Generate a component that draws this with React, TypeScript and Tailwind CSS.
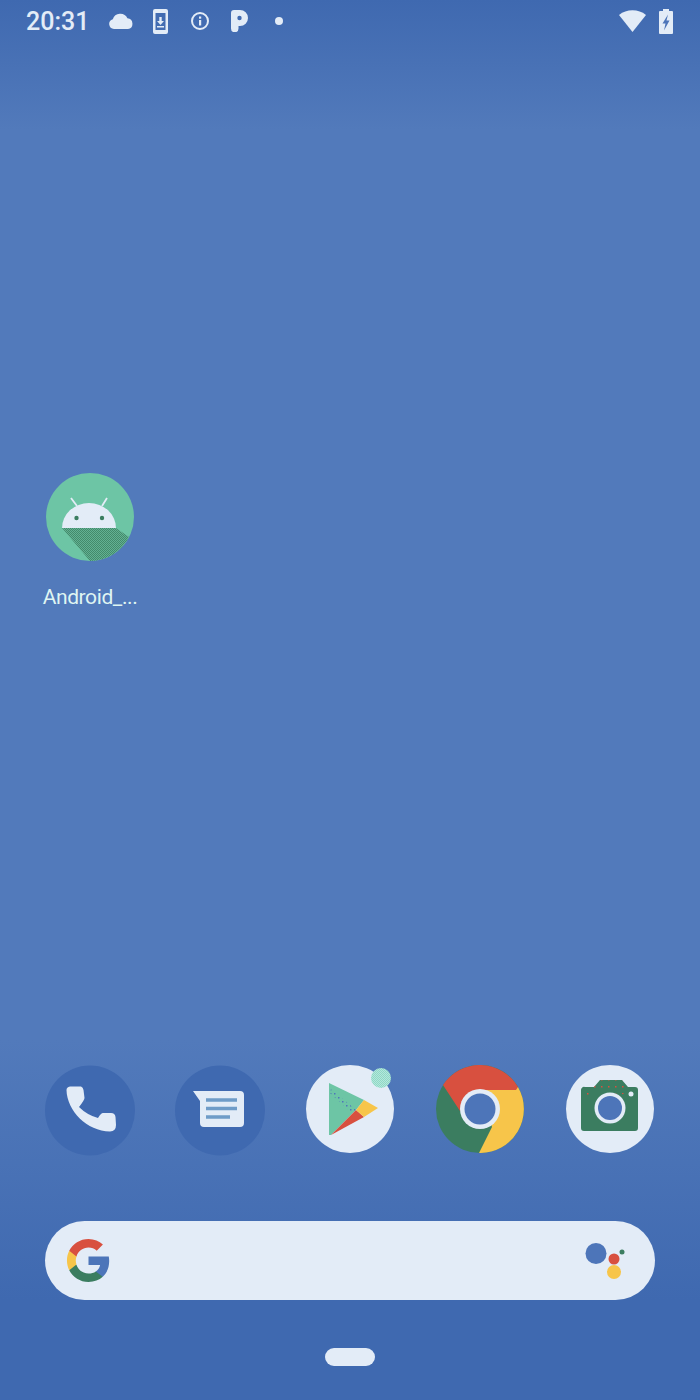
import React from 'react';

const INK = '#e3ecf7';
const GREEN = '#3b7d60';
const RED = '#d8503f';
const YELLOW = '#f7c54a';
const MINT = '#6dc5a5';
const BLUE = '#4d75b9';

const Dither = ({ id, a, b }: { id: string; a: string; b: string }) => (
  <pattern id={id} width="2" height="2" patternUnits="userSpaceOnUse">
    <rect width="2" height="2" fill={a} />
    <rect width="1" height="1" fill={b} />
    <rect x="1" y="1" width="1" height="1" fill={b} />
  </pattern>
);

const Specks = ({ id, color, size }: { id: string; color: string; size: number }) => (
  <pattern id={id} width={size} height={size} patternUnits="userSpaceOnUse">
    <rect width="1.500" height="1.500" fill={color} />
  </pattern>
);

const StatusBar = () => (
  <div className="flex h-[42px] items-center pl-[26px] pr-[27px]">
    <span className="text-[25px] font-medium leading-none text-[#e3ecf7] font-['Roboto',sans-serif]">20:31</span>
    {/* cloud */}
    <svg className="ml-[20px]" width="24" height="16" viewBox="0 0 24 16">
      <path fill={INK} d="M5 16A5 5 0 0 1 3.800 6.200 7.800 7.800 0 0 1 18.400 5.300 5.400 5.400 0 0 1 19 16Z" />
    </svg>
    {/* phone with download arrow */}
    <svg className="ml-[20px]" width="15" height="25" viewBox="0 0 15 25">
      <path fill={INK} fillRule="evenodd" d="M2 0H13A2 2 0 0 1 15 2V23A2 2 0 0 1 13 25H2A2 2 0 0 1 0 23V2A2 2 0 0 1 2 0ZM2.500 4V21H12.500V4Z" />
      <path fill={INK} d="M6.300 8H8.700V12H11L7.500 16L4 12H6.300ZM4 17H11V18.500H4Z" />
    </svg>
    {/* info */}
    <svg className="ml-[23px]" width="18" height="18" viewBox="0 0 18 18">
      <circle cx="9" cy="9" r="8" fill="none" stroke={INK} strokeWidth="2" />
      <rect x="8" y="8" width="2.200" height="5.500" fill={INK} />
      <rect x="8" y="4.500" width="2.200" height="2.200" fill={INK} />
    </svg>
    {/* P */}
    <svg className="ml-[22px]" width="17" height="22" viewBox="0 0 17 22">
      <path fill={INK} fillRule="evenodd" d="M3 0H9A8 8 0 0 1 9 16H7.500V18.500A3.500 3.500 0 0 1 0 18.500V3A3 3 0 0 1 3 0ZM8.500 5.800A2.200 2.200 0 0 0 8.500 10.200A2.200 2.200 0 0 0 8.500 5.800Z" />
    </svg>
    <span className="ml-[27px] h-[8px] w-[8px] rounded-full bg-[#e3ecf7]" />
    {/* wifi */}
    <svg className="ml-auto" width="27" height="22" viewBox="0 0 27 22">
      <path fill={INK} d="M0 5A22 22 0 0 1 27 5L13.500 22Z" />
    </svg>
    {/* battery */}
    <svg className="ml-[13px]" width="14" height="25" viewBox="0 0 14 25">
      <path fill={INK} d="M4 0H10V2H13A1 1 0 0 1 14 3V24A1 1 0 0 1 13 25H1A1 1 0 0 1 0 24V3A1 1 0 0 1 1 2H4Z" />
      <path fill={BLUE} d="M9 5.500L3.500 14.500H6.500L5 21.500L10.500 11.500H7.500Z" />
    </svg>
  </div>
);

const AndroidApp = () => (
  <div className="ml-[25px] mt-[431px] flex w-[130px] flex-col items-center">
    <svg width="88" height="88" viewBox="0 0 88 88">
      <defs>
        <Dither id="androidShadow" a="#438a6b" b="#63b193" />
      </defs>
      <circle cx="44" cy="44" r="44" fill={MINT} />
      <path fill="url(#androidShadow)" d="M16 55H70L83 64A44 44 0 0 1 44 88Z" />
      <path stroke={INK} strokeWidth="1.800" d="M25 25L31 33M61 25L56 33" />
      <path fill={INK} d="M16 55A27 25 0 0 1 70 55Z" />
      <circle cx="30.500" cy="45" r="2.200" fill={GREEN} />
      <circle cx="56" cy="45" r="2.200" fill={GREEN} />
    </svg>
    <span className="mt-[24px] text-[21px] leading-[24px] tracking-[-0.4px] text-[#dff5f2] font-['Roboto',sans-serif]">Android_...</span>
  </div>
);

const Dock = () => (
  <div className="mt-auto grid grid-cols-5 items-start px-[25px]">
    <div className="flex justify-center">
      <svg width="90" height="91" viewBox="0 0 90 91">
        <circle cx="45" cy="45.500" r="45" fill="#3f69b0" />
        <path fill={INK} d="M25 21.500H36Q38 22 38.500 25L39.500 33Q39.500 35 34 42Q42 50 53 53Q56 48 58 48H66Q70 48 70.500 52L71 60Q71 66 65 66.500C42 66 22 46 21.500 25Q21.500 22 25 21.500Z" />
      </svg>
    </div>
    <div className="flex justify-center">
      <svg width="90" height="91" viewBox="0 0 90 91">
        <circle cx="45" cy="45.500" r="45" fill="#3f69b0" />
        <path fill={INK} d="M18 26H65A4 4 0 0 1 69 30V58A4 4 0 0 1 65 62H37Q33 62 29 62A4 4 0 0 1 25 58V36Z" />
        <path stroke="#6f9cc8" strokeWidth="3.500" d="M31 35H62M31 43.500H62M31 52H55" />
      </svg>
    </div>
    <div className="flex justify-center">
      <svg width="88" height="88" viewBox="0 0 88 88" className="overflow-visible">
        <defs>
          <Dither id="badge" a="#8ed9c5" b="#b5e6dc" />
          <Specks id="playSpecks" color={BLUE} size={4} />
        </defs>
        <circle cx="44" cy="44" r="44" fill={INK} />
        <path fill={MINT} d="M23 18L58 35L50 45L25 70H23Z" />
        <path fill="url(#playSpecks)" d="M25 24L50 45L46 48L24 28Z" />
        <path fill={RED} d="M50 45L58 52L25 70Z" />
        <path fill={YELLOW} d="M58 35L72 43L58 52L50 45Z" />
        <circle cx="75" cy="13" r="10" fill="url(#badge)" />
      </svg>
    </div>
    <div className="flex justify-center">
      <svg width="88" height="88" viewBox="0 0 88 88">
        <circle cx="44" cy="44" r="44" fill={GREEN} />
        <path fill={YELLOW} d="M82 22A44 44 0 0 1 43 88L56 62L44 25Z" />
        <path fill={RED} d="M7 20A44 44 0 0 1 82 22L80 25H44L24 46Z" />
        <circle cx="44" cy="44" r="20" fill={INK} />
        <circle cx="44" cy="44" r="15.500" fill={BLUE} />
      </svg>
    </div>
    <div className="flex justify-center">
      <svg width="88" height="88" viewBox="0 0 88 88">
        <defs>
          <Specks id="cameraSpecks" color={RED} size={7} />
        </defs>
        <circle cx="44" cy="44" r="44" fill={INK} />
        <path fill={GREEN} d="M19 22H28L34 15H56L62 22H69A3 3 0 0 1 72 25V63A3 3 0 0 1 69 66H18A3 3 0 0 1 15 63V25A3 3 0 0 1 19 22Z" />
        <path fill="url(#cameraSpecks)" d="M34 15H56L64 30L30 26L16 36V24L28 22Z" />
        <circle cx="44" cy="43" r="15.500" fill={INK} />
        <circle cx="44" cy="43" r="12" fill={BLUE} />
        <circle cx="65" cy="29" r="2.500" fill={INK} />
      </svg>
    </div>
  </div>
);

const SearchBar = () => (
  <div className="mx-[45px] mt-[65px] flex h-[79px] items-center justify-between rounded-full bg-[#e3ecf7] pl-[20px] pr-[28px]">
    <svg width="47" height="47" viewBox="0 0 48 48">
      <path fill={BLUE} d="M45.120 24.500c0-1.560-.14-3.060-.4-4.500H24v8.510h11.840c-.51 2.750-2.060 5.080-4.390 6.640v5.520h7.110c4.160-3.830 6.560-9.470 6.560-16.170z" />
      <path fill={GREEN} d="M24 46c5.940 0 10.920-1.970 14.560-5.330l-7.110-5.520c-1.970 1.320-4.490 2.210-7.450 2.210-5.730 0-10.580-3.870-12.310-9.070H4.340v5.700C7.960 41.070 15.400 46 24 46z" />
      <path fill={YELLOW} d="M11.690 28.180C11.250 26.860 11 25.450 11 24s.25-2.860.69-4.180v-5.700H4.340C2.850 17.090 2 20.450 2 24c0 3.550.85 6.910 2.340 9.880l7.350-5.700z" />
      <path fill={RED} d="M24 10.750c3.230 0 6.130 1.110 8.410 3.290l6.310-6.310C34.910 4.180 29.930 2 24 2 15.400 2 7.960 6.930 4.340 14.120l7.350 5.700c1.730-5.200 6.580-9.070 12.310-9.070z" />
    </svg>
    <svg width="42" height="38" viewBox="0 0 42 38">
      <circle cx="11" cy="11.500" r="10.500" fill={BLUE} />
      <circle cx="29" cy="17" r="5.500" fill={RED} />
      <circle cx="37" cy="10" r="2.500" fill={GREEN} />
      <circle cx="29" cy="30" r="7" fill={YELLOW} />
    </svg>
  </div>
);

export default function App() {
  return (
    <div className="flex h-[1400px] w-[700px] flex-col overflow-hidden bg-[linear-gradient(to_bottom,#3f69b0_0px,#527abb_130px,#527abb_1040px,#3f69b0_1300px)]">
      <StatusBar />
      <AndroidApp />
      <Dock />
      <SearchBar />
      <div className="mt-[48px] mb-[34px] h-[18px] w-[50px] self-center rounded-full bg-[#e3ecf7]" />
    </div>
  );
}
